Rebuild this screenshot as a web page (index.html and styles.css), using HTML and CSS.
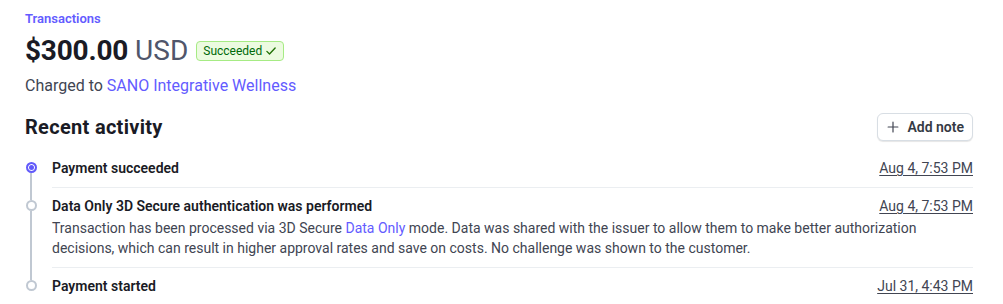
FILE: index.html
```html
<!DOCTYPE html>
<html lang="en">
<head>
<meta charset="utf-8">
<title>Transaction</title>
<link rel="stylesheet" href="styles.css">
</head>
<body>
<main class="page">
  <a class="crumb" href="#">Transactions</a>
  <div class="amount-row">
    <span class="amount">$300.00</span>
    <span class="currency">USD</span>
    <span class="badge">Succeeded
      <svg class="badge-icon" viewBox="0 0 16 16" width="12" height="12" aria-hidden="true"><path d="M2.5 8.5l3.5 3.5 7.5-8" fill="none" stroke="currentColor" stroke-width="1.8" stroke-linecap="round" stroke-linejoin="round"/></svg>
    </span>
  </div>
  <p class="charged">Charged to <a href="#">SANO Integrative Wellness</a></p>

  <div class="section-head">
    <h2 class="section-title">Recent activity</h2>
    <button class="btn" type="button">
      <svg class="btn-icon" viewBox="0 0 16 16" width="12" height="12" aria-hidden="true"><path d="M8 1.5v13M1.5 8h13" fill="none" stroke="currentColor" stroke-width="1.6" stroke-linecap="round"/></svg>
      <span>Add note</span>
    </button>
  </div>

  <ol class="timeline">
    <li class="event first">
      <div class="marker"><span class="seg top"></span><span class="dot active"></span><span class="seg bottom"></span></div>
      <div class="content">
        <div class="event-head"><span class="event-title">Payment succeeded</span><a class="date" href="#">Aug 4, 7:53 PM</a></div>
      </div>
    </li>
    <li class="event">
      <div class="marker"><span class="seg top"></span><span class="dot"></span><span class="seg bottom"></span></div>
      <div class="content">
        <div class="event-head"><span class="event-title">Data Only 3D Secure authentication was performed</span><a class="date" href="#">Aug 4, 7:53 PM</a></div>
        <p class="event-desc">Transaction has been processed via 3D Secure <a href="#">Data Only</a> mode. Data was shared with the issuer to allow them to make better authorization decisions, which can result in higher approval rates and save on costs. No challenge was shown to the customer.</p>
      </div>
    </li>
    <li class="event last">
      <div class="marker"><span class="seg top"></span><span class="dot"></span><span class="seg bottom"></span></div>
      <div class="content">
        <div class="event-head"><span class="event-title">Payment started</span><a class="date" href="#">Jul 31, 4:43 PM</a></div>
      </div>
    </li>
  </ol>
</main>
</body>
</html>
```
FILE: styles.css
```css
* { box-sizing: border-box; }
html, body { margin: 0; background: #fff; }
body {
  font-family: Roboto, "Noto Sans", "Liberation Sans", sans-serif;
  color: #414552;
  -webkit-font-smoothing: antialiased;
}
a { color: #635bff; text-decoration: none; }

.page {
  padding: 9px 30px 0 25px;
}

.crumb {
  display: block;
  font-size: 13px;
  line-height: 20px;
  font-weight: 600;
  color: #635bff;
}

.amount-row {
  display: flex;
  align-items: center;
  height: 36px;
  margin-top: 3px;
}
.amount {
  font-size: 28px;
  font-weight: 700;
  color: #1a1b25;
  letter-spacing: -0.2px;
}
.currency {
  font-size: 28px;
  font-weight: 400;
  color: #50566b;
  margin-left: 7px;
}
.badge {
  display: inline-flex;
  align-items: center;
  gap: 3px;
  margin-left: 8px;
  margin-top: 2px;
  height: 20px;
  padding: 0 6px;
  border: 1px solid #a6eb84;
  border-radius: 4px;
  background: #ecfbe0;
  color: #006908;
  font-size: 12px;
  line-height: 18px;
}
.badge-icon { color: #217005; }

.charged {
  margin: 6px 0 0;
  font-size: 16px;
  line-height: 24px;
  color: #414552;
}

.section-head {
  display: flex;
  align-items: center;
  justify-content: space-between;
  margin-top: 15px;
  height: 28px;
}
.section-title {
  margin: 0;
  font-size: 20px;
  font-weight: 700;
  letter-spacing: 0.3px;
  color: #1a1b25;
}
.btn {
  display: inline-flex;
  align-items: center;
  gap: 8px;
  height: 28px;
  padding: 0 8px 0 9px;
  border: 1px solid #d8dee4;
  border-radius: 6px;
  background: #fff;
  box-shadow: 0 1px 1px rgba(0, 0, 0, 0.1);
  font-family: inherit;
  font-size: 14px;
  font-weight: 600;
  color: #353a44;
}
.btn-icon { color: #414552; }

.timeline {
  list-style: none;
  margin: 9px 0 0;
  padding: 0;
}
.event {
  display: flex;
}
.marker {
  width: 27px;
  flex: none;
  display: flex;
  flex-direction: column;
}
.seg {
  display: block;
  width: 2px;
  margin-left: 5px;
  background: #c0c8d2;
}
.seg.top { height: 12px; }
.seg.bottom { flex: 1; }
.first .seg.top, .last .seg.bottom { background: transparent; }

.dot {
  display: block;
  flex: none;
  width: 11px;
  height: 11px;
  margin-left: 0.5px;
  border-radius: 50%;
  border: 2px solid #c0c8d2;
  background: #fff;
}
.dot.active {
  border: 2px solid #625afa;
  background: #625afa;
  box-shadow: inset 0 0 0 1px #fff;
}

.content {
  flex: 1;
  padding: 8px 0 9px;
  border-bottom: 1px solid #ebeef1;
}
.last .content { border-bottom: 0; }
.event-head {
  display: flex;
  justify-content: space-between;
  align-items: center;
  line-height: 20px;
}
.event-title {
  font-size: 14px;
  font-weight: 600;
  color: #1a1b25;
}
.date {
  font-size: 14px;
  color: #414552;
  text-decoration: underline;
  text-underline-offset: 2px;
}
.event-desc {
  margin: 2px 0 0;
  font-size: 14px;
  line-height: 20px;
  color: #414552;
}
```
